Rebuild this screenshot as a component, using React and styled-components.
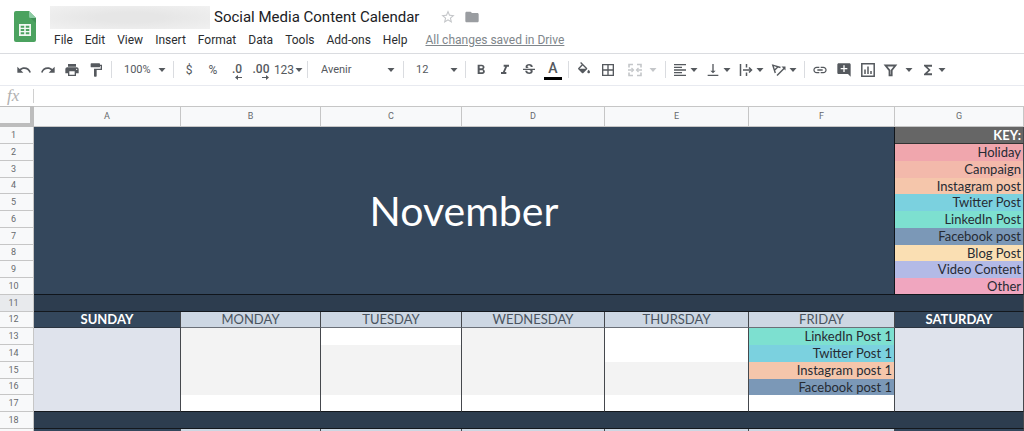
import React from "react";
import styled, { createGlobalStyle } from "styled-components";
import {
  MdUndo,
  MdRedo,
  MdPrint,
  MdFormatPaint,
  MdFormatBold,
  MdFormatItalic,
  MdStrikethroughS,
  MdBorderAll,
  MdFormatAlignLeft,
  MdVerticalAlignBottom,
  MdLink,
  MdAddComment,
  MdFunctions,
  MdStarBorder,
  MdFolder,
} from "react-icons/md";

const MENUS = [
  "File",
  "Edit",
  "View",
  "Insert",
  "Format",
  "Data",
  "Tools",
  "Add-ons",
  "Help",
];

const COLUMNS = [
  { name: "A", width: 147, day: "SUNDAY", weekend: true },
  { name: "B", width: 140, day: "MONDAY" },
  { name: "C", width: 141, day: "TUESDAY" },
  { name: "D", width: 143, day: "WEDNESDAY" },
  { name: "E", width: 144, day: "THURSDAY" },
  { name: "F", width: 146, day: "FRIDAY" },
  { name: "G", width: 129, day: "SATURDAY", weekend: true },
];

const KEY = [
  { label: "Holiday", color: "#f0a6ad" },
  { label: "Campaign", color: "#f3b9ab" },
  { label: "Instagram post", color: "#f5c6ab" },
  { label: "Twitter Post", color: "#7bd1df" },
  { label: "LinkedIn Post", color: "#7de0d0" },
  { label: "Facebook post", color: "#7b98b7" },
  { label: "Blog Post", color: "#fadfb3" },
  { label: "Video Content", color: "#b3bae6" },
  { label: "Other", color: "#f0a6bf" },
];

const FRIDAY_POSTS = [
  { label: "LinkedIn Post 1", color: "#7de0d0" },
  { label: "Twitter Post 1", color: "#7bd1df" },
  { label: "Instagram post 1", color: "#f5c6ab" },
  { label: "Facebook post 1", color: "#7b98b7" },
];

const WEEKEND = "#dfe3ec";
const GREY = "#f3f3f3";
const WHITE = "#ffffff";

// first and last grey row of each weekday column
const SHADED = { B: [13, 16], C: [14, 16], D: [13, 16], E: [15, 16] };

const dayColor = (column, row) => {
  if (column.weekend) return WEEKEND;
  const range = SHADED[column.name];
  return range && row >= range[0] && row <= range[1] ? GREY : WHITE;
};

const Caret = () => (
  <CaretSvg viewBox="0 0 8 4" aria-hidden="true">
    <path d="M0.5 0h7L4 3.9z" />
  </CaretSvg>
);

const SheetsLogo = () => (
  <Logo viewBox="0 0 22 31" aria-hidden="true">
    <path
      d="M2 0h13l7 7v22a2 2 0 0 1-2 2H2a2 2 0 0 1-2-2V2a2 2 0 0 1 2-2z"
      fill="#4ba25f"
    />
    <path d="M15 0l7 7h-5.5A1.5 1.5 0 0 1 15 5.5z" fill="#8ccba4" />
    <path d="M16.5 7H22v5z" fill="#3f8f55" />
    <path
      d="M5 13h12v12H5zM6.7 14.7v2h3.5v-2zM11.8 14.7v2h3.5v-2zM6.7 18v2h3.5v-2zM11.8 18v2h3.5v-2zM6.7 21.3v2h3.5v-2zM11.8 21.3v2h3.5v-2z"
      fill="#f1f8f2"
      fillRule="evenodd"
    />
  </Logo>
);

const FillIcon = () => (
  <svg viewBox="0 0 24 24" fill="currentColor">
    <path d="M16.56 8.94L7.62 0 6.21 1.41l2.38 2.38-5.15 5.15c-.59.59-.59 1.54 0 2.12l5.5 5.5c.29.29.68.44 1.06.44s.77-.15 1.06-.44l5.5-5.5c.59-.58.59-1.53 0-2.12zM5.21 10L10 5.21 14.79 10H5.21zM19 11.5s-2 2.17-2 3.5c0 1.1.9 2 2 2s2-.9 2-2c0-1.33-2-3.5-2-3.5z" />
  </svg>
);

const MergeIcon = () => (
  <svg viewBox="0 0 16 16" fill="none" stroke="currentColor" strokeWidth="1.6">
    <path d="M6 2.5H2v3M10 2.5h4v3M6 13.5H2v-3M10 13.5h4v-3M1 8h5M15 8h-5" />
    <path d="M4.5 6L6.5 8l-2 2M11.5 6l-2 2 2 2" strokeWidth="1.2" />
  </svg>
);

const WrapIcon = () => (
  <svg viewBox="0 0 16 16" fill="none" stroke="currentColor" strokeWidth="1.5">
    <path d="M2.5 2v12M8.5 2v3.5M8.5 10.5V14M5 8h8" />
    <path d="M11 5.5L13.5 8 11 10.5" />
  </svg>
);

// slanted letter A beside a rising arrow
const RotateIcon = () => (
  <svg viewBox="0 0 16 16" fill="none" stroke="currentColor" strokeWidth="1.4">
    <path d="M4.3 11L1.8 3.2 9.5 5.5M1.8 3.2L3.2 3.6M3.5 8.3L7 4.8" />
    <path d="M6 13.5L13.5 6" />
    <path d="M10.5 4.5h4v4z" fill="currentColor" stroke="none" />
  </svg>
);

const ChartIcon = () => (
  <svg viewBox="0 0 16 16" fill="none" stroke="currentColor" strokeWidth="1.5">
    <path d="M1.8 1.8h12.4v12.4H1.8zM5 12V7.5M8 12V4.5M11 12V9" />
  </svg>
);

const FilterIcon = () => (
  <svg viewBox="0 0 16 16" fill="none" stroke="currentColor" strokeWidth="1.8">
    <path d="M2.5 3.500h10L8.700 8.300v5H6.500v-5z" />
  </svg>
);

const DecimalArrow = ({ right }) => (
  <ArrowSvg viewBox="0 0 7 5" aria-hidden="true">
    <path d={right ? "M0 2h4V0l3 2.5L4 5V3H0z" : "M7 2H3V0L0 2.5 3 5V3h4z"} />
  </ArrowSvg>
);

const Picker = ({ label, value, width, inset, end }) => (
  <PickerBox $width={width} $inset={inset} $end={end}>
    <select aria-label={label} defaultValue={value}>
      <option>{value}</option>
    </select>
    <Caret />
  </PickerBox>
);

const Toolbar = () => (
  <ToolbarRow role="toolbar" aria-label="Formatting">
    <Tool aria-label="Undo"><MdUndo /></Tool>
    <Tool aria-label="Redo"><MdRedo /></Tool>
    <Tool aria-label="Print"><MdPrint /></Tool>
    <Tool aria-label="Paint format"><MdFormatPaint /></Tool>
    <Separator />
    <Picker label="Zoom" value="100%" width={55} inset={9} end={4} />
    <Separator />
    <Tool aria-label="Format as currency">$</Tool>
    <Tool aria-label="Format as percent">%</Tool>
    <Tool aria-label="Decrease decimal places">
      <Decimal>.0<DecimalArrow /></Decimal>
    </Tool>
    <Tool aria-label="Increase decimal places">
      <Decimal>.00<DecimalArrow right /></Decimal>
    </Tool>
    <NumberFormat aria-label="More formats">123<Caret /></NumberFormat>
    <Separator />
    <Picker label="Font" value="Avenir" width={89} inset={10} end={5} />
    <Separator />
    <Picker label="Font size" value="12" width={55} inset={9} end={4} />
    <Separator />
    <Tool aria-label="Bold"><MdFormatBold /></Tool>
    <Tool aria-label="Italic"><MdFormatItalic /></Tool>
    <Tool aria-label="Strikethrough"><MdStrikethroughS /></Tool>
    <Tool aria-label="Text color"><TextColor>A</TextColor></Tool>
    <Separator />
    <Tool aria-label="Fill color"><FillIcon /></Tool>
    <Tool aria-label="Borders"><MdBorderAll /></Tool>
    <MenuTool $width={42} $gap={6} $inset={7} disabled aria-label="Merge cells">
      <MergeIcon /><Caret />
    </MenuTool>
    <Separator />
    <MenuTool $width={33} aria-label="Horizontal align">
      <MdFormatAlignLeft /><Caret />
    </MenuTool>
    <MenuTool $width={33} aria-label="Vertical align">
      <MdVerticalAlignBottom /><Caret />
    </MenuTool>
    <MenuTool $width={33} aria-label="Text wrapping">
      <WrapIcon /><Caret />
    </MenuTool>
    <MenuTool $width={33} aria-label="Text rotation">
      <RotateIcon /><Caret />
    </MenuTool>
    <Separator />
    <Tool aria-label="Insert link"><MdLink /></Tool>
    <Tool aria-label="Insert comment"><MdAddComment /></Tool>
    <Tool aria-label="Insert chart"><ChartIcon /></Tool>
    <MenuTool $width={37} $gap={6} aria-label="Filter">
      <FilterIcon /><Caret />
    </MenuTool>
    <MenuTool $width={33} aria-label="Functions">
      <MdFunctions /><Caret />
    </MenuTool>
  </ToolbarRow>
);

const WeekRow = ({ row }) => (
  <tr>
    <RowHead scope="row">{row}</RowHead>
    {COLUMNS.map((column) => (
      <DayName key={column.name} $weekend={column.weekend}>
        {row ? column.day : null}
      </DayName>
    ))}
  </tr>
);

const BandRow = ({ row, active }) => (
  <tr>
    <RowHead scope="row" $active={active}>{row}</RowHead>
    <Band colSpan={7} />
  </tr>
);

const Sheet = () => (
  <Grid>
    <colgroup>
      <col width={34} />
      {COLUMNS.map((column) => (
        <col key={column.name} width={column.width} />
      ))}
    </colgroup>
    <thead>
      <tr>
        <Corner />
        {COLUMNS.map((column) => (
          <ColumnHead key={column.name} scope="col">{column.name}</ColumnHead>
        ))}
      </tr>
    </thead>
    <tbody>
      <tr>
        <RowHead scope="row">1</RowHead>
        <Month colSpan={6} rowSpan={10}>November</Month>
        <KeyTitle>KEY:</KeyTitle>
      </tr>
      {KEY.map((item, i) => (
        <tr key={item.label}>
          <RowHead scope="row">{i + 2}</RowHead>
          <Entry $color={item.color} $last={i === KEY.length - 1}>
            {item.label}
          </Entry>
        </tr>
      ))}
      <BandRow row={11} active />
      <WeekRow row={12} />
      {[13, 14, 15, 16, 17].map((row) => (
        <tr key={row}>
          <RowHead scope="row">{row}</RowHead>
          {COLUMNS.map((column) => {
            const post = column.name === "F" ? FRIDAY_POSTS[row - 13] : null;
            return (
              <Entry
                key={column.name}
                $color={post ? post.color : dayColor(column, row)}
                $last={row === 17}
              >
                {post ? post.label : null}
              </Entry>
            );
          })}
        </tr>
      ))}
      <BandRow row={18} />
      <WeekRow />
    </tbody>
  </Grid>
);

const App = () => (
  <Page>
    <GlobalStyle />
    <Header>
      <SheetsLogo />
      <HeaderText>
        <TitleRow>
          <Redacted />
          <Title
            aria-label="Document title"
            defaultValue="Social Media Content Calendar"
          />
          <TitleAction aria-label="Star"><MdStarBorder /></TitleAction>
          <TitleAction aria-label="Move to folder"><MdFolder /></TitleAction>
        </TitleRow>
        <MenuBar>
          {MENUS.map((menu) => (
            <Menu key={menu}>{menu}</Menu>
          ))}
          <SavedLink href="#drive">All changes saved in Drive</SavedLink>
        </MenuBar>
      </HeaderText>
    </Header>
    <Toolbar />
    <FormulaBar>
      <label htmlFor="formula">fx</label>
      <input id="formula" />
    </FormulaBar>
    <Sheet />
  </Page>
);

const GlobalStyle = createGlobalStyle`
  * {
    box-sizing: border-box;
  }

  body {
    margin: 0;
    background: #fff;
    font-family: Roboto, "Liberation Sans", sans-serif;
  }

  button, input, select {
    margin: 0;
    padding: 0;
    border: 0;
    background: none;
    font-family: inherit;
    color: inherit;
  }
`;

const Page = styled.div`
  height: 100vh;
  overflow: hidden;
`;

const Header = styled.header`
  display: flex;
  gap: 14px;
  height: 54px;
  padding: 5px 14px 0;
  border-bottom: 1px solid #dadce0;
`;

const Logo = styled.svg`
  width: 22px;
  height: 31px;
  margin-top: 6px;
`;

const HeaderText = styled.div`
  display: flex;
  flex-direction: column;
`;

const TitleRow = styled.div`
  display: flex;
  align-items: center;
  height: 24px;
`;

const Redacted = styled.div`
  width: 160px;
  height: 23px;
  margin-right: 4px;
  background: radial-gradient(ellipse, #e6e6e6 30%, #f1f1f1 100%);
`;

const Title = styled.input`
  width: 226px;
  height: 24px;
  font-size: 15px;
  color: #202124;
`;

const TitleAction = styled.button`
  display: flex;
  width: 24px;
  color: #9a9da1;

  svg {
    width: 16px;
    height: 16px;
  }

  &:nth-of-type(1) {
    color: #c4c6c9;
  }
`;

const MenuBar = styled.nav`
  display: flex;
  align-items: center;
  gap: 12px;
  height: 21px;
  padding-left: 4px;
  font-size: 12px;
`;

const Menu = styled.button`
  font-size: 12px;
  line-height: 16px;
  color: #2b2d30;
`;

const SavedLink = styled.a`
  margin-left: 6px;
  color: #80868b;
`;

const ToolbarRow = styled.div`
  display: flex;
  align-items: center;
  height: 32px;
  padding-left: 12px;
  border-bottom: 1px solid #e8eaf0;
  color: #55595e;
`;

const Tool = styled.button`
  display: flex;
  align-items: center;
  justify-content: center;
  flex: none;
  width: 24px;
  height: 24px;
  font-size: 12px;

  > svg {
    width: 16px;
    height: 16px;
  }
`;

const CaretSvg = styled.svg`
  && {
    flex: none;
    width: 8px;
    height: 4px;
    fill: currentColor;
  }
`;

const MenuTool = styled(Tool)`
  justify-content: flex-start;
  gap: ${({ $gap }) => $gap || 2}px;
  width: ${({ $width }) => $width}px;
  padding-left: ${({ $inset }) => $inset || 3}px;

  &:disabled {
    color: #c4c6c9;
  }
`;

const NumberFormat = styled(Tool)`
  width: 31px;
  gap: 1px;
`;

const Separator = styled.div`
  flex: none;
  width: 1px;
  height: 17px;
  margin: 0 3px;
  background: #dadce0;
`;

const PickerBox = styled.div`
  display: flex;
  align-items: center;
  flex: none;
  width: ${({ $width }) => $width}px;
  padding-right: ${({ $end }) => $end}px;

  select {
    appearance: none;
    flex: 1;
    min-width: 0;
    height: 24px;
    padding-left: ${({ $inset }) => $inset}px;
    font-size: 11px;
  }
`;

const Decimal = styled.span`
  display: flex;
  flex-direction: column;
  align-items: flex-end;
  padding-top: 4px;
  font-size: 12px;
  font-weight: 500;
  line-height: 12px;
`;

const ArrowSvg = styled.svg`
  width: 7px;
  height: 5px;
  fill: currentColor;
`;

const TextColor = styled.span`
  width: 18px;
  border-bottom: 3px solid #000;
  font-size: 14px;
  line-height: 17px;
  font-weight: 500;
`;

const FormulaBar = styled.div`
  display: flex;
  align-items: center;
  height: 20px;

  label {
    width: 33px;
    padding-left: 7px;
    font-family: "Liberation Serif", serif;
    font-size: 17px;
    font-style: italic;
    line-height: 18px;
    color: #b0b0b0;
  }

  input {
    flex: 1;
    height: 14px;
    padding-left: 4px;
    border-left: 1px solid #d0d0d0;
    font-size: 12px;
  }
`;

const Grid = styled.table`
  width: 100%;
  table-layout: fixed;
  border-collapse: separate;
  border-spacing: 0;
  font-family: Lato, sans-serif;
  font-size: 13px;
  line-height: 15px;

  th, td {
    height: 17px;
    padding: 0;
    white-space: nowrap;
  }

  tbody tr:nth-child(4n) > * {
    height: 16px;
  }

  thead th, thead td {
    height: 21px;
  }
`;

const Corner = styled.td`
  background: #f8f9fa;
  border: solid #bdbdbd;
  border-width: 1px 4px 4px 0;
`;

const ColumnHead = styled.th`
  background: #f8f9fa;
  border: solid #c6c6c6;
  border-width: 1px 1px 1px 0;
  font-family: Roboto, sans-serif;
  font-size: 9px;
  font-weight: 400;
  color: #66696d;
`;

const RowHead = styled.th`
  padding-right: 6px !important;
  background: ${({ $active }) => ($active ? "#e8eaed" : "#f8f9fa")};
  border: solid #c6c6c6;
  border-width: 0 1px 1px 0;
  font-family: Roboto, sans-serif;
  font-size: 9px;
  font-weight: 400;
  color: #66696d;
`;

const Cell = styled.td`
  border: solid #45484d;
  border-width: 0 1px 0 0;
  color: #262b33;
`;

const Month = styled(Cell)`
  background: #34475c;
  border-color: #10151b;
  border-bottom-width: 1px;
  font-size: 41px;
  line-height: 48px;
  text-align: center;
  color: #fff;
`;

const KeyTitle = styled(Cell)`
  padding-right: 2px !important;
  background: #666;
  border-bottom: 1px solid #333;
  font-weight: 700;
  text-align: right;
  color: #fff;
`;

const Entry = styled(Cell)`
  padding-right: 2px !important;
  background: ${({ $color }) => $color};
  border-bottom: ${({ $last }) => ($last ? "1px solid #14181d" : "0")};
  text-align: right;
`;

const Band = styled(Cell)`
  background: #2d3d4f;
  border-bottom: 1px solid #14181d;
`;

const DayName = styled(Cell)`
  background: ${({ $weekend }) => ($weekend ? "#34475c" : "#cdd7e3")};
  border-bottom: 1px solid ${({ $weekend }) => ($weekend ? "#2b3440" : "#6a6f77")};
  font-weight: ${({ $weekend }) => ($weekend ? 700 : 400)};
  text-align: center;
  color: ${({ $weekend }) => ($weekend ? "#fff" : "#4a5460")};
`;

export default App;
